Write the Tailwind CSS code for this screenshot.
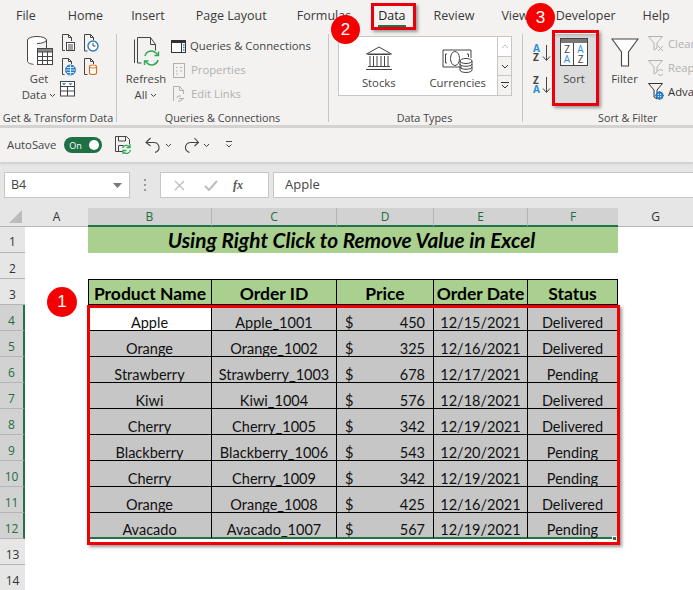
<!DOCTYPE html>
<html><head><meta charset="utf-8"><script src="https://cdn.jsdelivr.net/npm/@tailwindcss/browser@4"></script></head>
<body class="m-0 bg-white">
<div class="relative w-[693px] h-[590px] overflow-hidden bg-white font-['Open_Sans','Liberation_Sans',sans-serif] text-[#3b3a39]">

<!-- tabs -->
<div class="flex h-[32px] bg-[#f3f2f1] text-[12.500px] pt-[7px]">
  <span class="ml-[16px]">File</span><span class="ml-[32px]">Home</span><span class="ml-[28px]">Insert</span><span class="ml-[31px]">Page Layout</span><span class="ml-[30px]">Formulas</span>
  <span class="ml-[27px] relative text-[#222]">Data<i class="absolute left-0 right-0 top-[18px] h-[2px] bg-[#217346]"></i></span>
  <span class="ml-[28px]">Review</span><span class="ml-[27px]">View</span><span class="ml-[27px]">Developer</span><span class="ml-[27px]">Help</span>
</div>

<!-- ribbon -->
<div class="flex h-[96px] bg-[#f3f2f1] border-b-[3px] border-[#d4d3d2] text-[11.300px] text-[#444]">
  <!-- group 1 -->
  <div class="w-[117px] shrink-0 h-[88px] mt-[2px] flex flex-col border-r border-[#c8c6c4]">
    <div class="h-[76px] shrink-0 flex pl-[22px] pt-[1px]">
      <div class="w-[34px] flex flex-col items-center">
        <svg width="30" height="32" viewBox="0 0 30 32" fill="none" stroke="#444" stroke-width="1"><ellipse cx="13" cy="5" rx="9.500" ry="3.500" fill="#fff"/><path d="M3.500 5v21c0 2 4 3.500 9.500 3.500V5" fill="#fff" stroke="none"/><path d="M3.500 5v21c0 2 3 3 6 3.300M22.500 5v8"/><rect x="13.500" y="13.500" width="15" height="16" fill="#fff"/><path d="M13.500 13.500h15v3.500h-15z" fill="#888"/><path d="M13.500 21.500h15M13.500 25.500h15M18.500 17v12.500M23.500 17v12.500"/></svg>
        <span class="leading-[16px] mt-[4px]">Get</span>
        <span class="leading-[16px] whitespace-nowrap">Data <svg class="inline" width="7" height="5" viewBox="0 0 7 5" fill="none" stroke="#444"><path d="M1 1l2.500 2.500L6 1"/></svg></span>
      </div>
      <div class="ml-[5px] grid grid-cols-[22px_16px] grid-rows-[24px_23px_20px] -mt-[1px]">
        <svg width="15" height="18" viewBox="0 0 15 18" fill="none" stroke="#444"><path d="M1.500 16.500V.5h6l3 3V7M4 16.500h-2.500"/><path d="M7.500.5v3h3"/><rect x="5.500" y="8.500" width="8" height="8" fill="#fff"/><path d="M7 11h5M7 13h5M7 15h5"/></svg>
        <svg width="16" height="18" viewBox="0 0 16 18" fill="none" stroke="#444"><path d="M1.500 17V.5h6l3 3V6M1.500 17h3"/><path d="M7.500.5v3h3"/><circle cx="10" cy="12" r="5" fill="#fff" stroke="#2b7cc4" stroke-width="1.400"/><path d="M10 9v3h2.500" stroke="#444"/></svg>
        <svg width="15" height="18" viewBox="0 0 15 18" fill="none" stroke="#444"><path d="M1.500 16.500V.5h6l3 3V6M1.500 16.500h2"/><path d="M7.500.5v3h3"/><circle cx="9.500" cy="12" r="5" fill="#2b7cc4" stroke="#2b7cc4"/><path d="M4.500 12h10M9.500 7v10M6 9.500h7M6 14.500h7" stroke="#fff" stroke-width=".8"/></svg>
        <svg width="16" height="18" viewBox="0 0 16 18" fill="none" stroke="#444"><path d="M1.500 16.500V.5h6l3 3V6M1.500 16.500h3"/><path d="M7.500.5v3h3"/><path d="M6.500 8.500c0-2 7-2 7 0v6.500c0 2-7 2-7 0z" fill="#fff" stroke="#d9701f" stroke-width="1.200"/><path d="M6.500 8.500c0 2 7 2 7 0" stroke="#d9701f"/></svg>
        <svg class="-ml-[2px]" width="16" height="16" viewBox="0 0 16 16" fill="none" stroke="#444"><rect x="1.500" y=".5" width="14" height="14.500" fill="#fff"/><path d="M1.500 5.500h14M1.500 10h14M8.500 5.500V15"/><path d="M3.500 2.500h3l-1.500 1.500zM10 2.500h3l-1.500 1.500z" fill="#2b7cc4" stroke="#2b7cc4" stroke-width=".6"/></svg>
      </div>
    </div>
    <div class="shrink-0 text-center text-[10.800px] leading-[14px] mt-[1px] whitespace-nowrap">Get &amp; Transform Data</div>
  </div>
  <!-- group 2 -->
  <div class="w-[212px] shrink-0 h-[88px] mt-[2px] flex flex-col border-r border-[#c8c6c4]">
    <div class="h-[76px] shrink-0 flex pl-[10px] pt-[3px]">
      <div class="w-[38px] flex flex-col items-center">
        <svg width="30" height="32" viewBox="0 0 30 32" fill="none" stroke="#444"><path d="M3.500 26V2.500M6.500 26V.5h13l5 7v6"/><path d="M19.500.5v7h5"/><path d="M6.500 26h4"/><path d="M14 19a6.500 6.500 0 0 1 11-3l2 2M27 23a6.500 6.500 0 0 1-11 3l-2-2" stroke="#2fa84f" stroke-width="1.400"/><path d="M27.500 14.500v4h-4M13.500 28v-4h4" stroke="#2fa84f" stroke-width="1.400"/></svg>
        <span class="leading-[16px] mt-[2px]">Refresh</span>
        <span class="leading-[16px] whitespace-nowrap">All <svg class="inline" width="7" height="5" viewBox="0 0 7 5" fill="none" stroke="#444"><path d="M1 1l2.500 2.500L6 1"/></svg></span>
      </div>
      <div class="ml-[6px] flex flex-col gap-[8px] mt-[1px]">
        <div class="flex items-center gap-[4px] h-[16px] whitespace-nowrap"><svg width="15" height="15" viewBox="0 0 15 15" fill="none" stroke="#333"><rect x=".5" y="1.500" width="14" height="12" fill="#fff"/><path d="M.5 1.500h14v2h-14z" fill="#333"/><path d="M10.500 3v10.500" /><path d="M12 6h1.500M12 8.500h1.500M12 11h1.500" stroke="#2b7cc4" stroke-width="1.300"/></svg><span>Queries &amp; Connections</span></div>
        <div class="flex items-center gap-[6px] h-[16px] text-[#b1b0af] whitespace-nowrap"><svg class="ml-[2px]" width="12" height="15" viewBox="0 0 12 15" fill="none" stroke="#b1b0af"><rect x=".5" y=".5" width="11" height="14"/><path d="M3 4.500h1.500M7 4.500h2M3 8h1.500M7 8h2M3 11h1.500"/></svg><span>Properties</span></div>
        <div class="flex items-center gap-[5px] h-[16px] text-[#b1b0af] whitespace-nowrap"><svg class="ml-[2px]" width="13" height="16" viewBox="0 0 13 16" fill="none" stroke="#b1b0af"><path d="M.5 15V.5h6l4 4V8M6.500.5v4h4"/><path d="M4 12a2 2 0 0 1 2-2h2M9 13a2 2 0 0 1-2 2H5M6 12.500h5"/></svg><span>Edit Links</span></div>
      </div>
    </div>
    <div class="shrink-0 text-center text-[10.800px] leading-[14px] mt-[1px]">Queries &amp; Connections</div>
  </div>
  <!-- group 3 -->
  <div class="w-[194px] shrink-0 h-[88px] mt-[2px] flex flex-col border-r border-[#c8c6c4]">
    <div class="h-[76px] shrink-0 flex pl-[9px] pt-[2px]">
      <div class="flex w-[159px] h-[60px] bg-white border border-[#c8c6c4] border-r-0">
        <div class="w-[80px] flex flex-col items-center pt-[9px]">
          <svg width="28" height="25" viewBox="0 0 28 25" fill="none" stroke="#444"><path d="M1.500 8L14 1l12.500 7zM3 8.500h22M5 10v10M8.500 10v10M12 10v10M16 10v10M19.500 10v10M23 10v10M3 20.500h22M1 23.500h26"/></svg>
          <span class="leading-[14px] mt-[5px]">Stocks</span>
        </div>
        <div class="w-[79px] flex flex-col items-center pt-[12px]">
          <svg width="31" height="24" viewBox="0 0 31 24" fill="none" stroke="#444"><path d="M20 18H1V1h28v8"/><path d="M5 5H3.500v9H5M25 5h1.500v3"/><ellipse cx="13" cy="9.500" rx="4.500" ry="7"/><ellipse cx="24" cy="12" rx="6" ry="2.500" fill="#fff"/><path d="M18 12v9c0 3.300 12 3.300 12 0v-9M18 15c0 3 12 3 12 0M18 18c0 3 12 3 12 0"/></svg>
          <span class="leading-[14px] mt-[3px] whitespace-nowrap">Currencies</span>
        </div>
      </div>
      <div class="flex flex-col w-[15px] h-[60px] border border-[#c8c6c4] bg-[#f3f2f1]">
        <div class="h-[20px] bg-white flex items-center justify-center border-b border-[#c8c6c4]"><svg width="8" height="5" viewBox="0 0 8 5" fill="none" stroke="#bbb"><path d="M1 4l3-3 3 3"/></svg></div>
        <div class="h-[19px] flex items-center justify-center border-b border-[#c8c6c4]"><svg width="8" height="5" viewBox="0 0 8 5" fill="none" stroke="#333"><path d="M1 1l3 3 3-3"/></svg></div>
        <div class="flex-1 flex items-center justify-center"><svg width="8" height="8" viewBox="0 0 8 8" fill="none" stroke="#333"><path d="M0 .5h8M1 3l3 3 3-3"/></svg></div>
      </div>
    </div>
    <div class="shrink-0 text-center text-[10.800px] leading-[14px] mt-[1px] pr-[2px]">Data Types</div>
  </div>
  <!-- group 4 -->
  <div class="flex-1 h-[88px] mt-[2px] flex flex-col">
    <div class="h-[76px] shrink-0 flex pl-[10px] pt-[1px]">
      <div class="w-[20px] flex flex-col gap-[14px] pt-[9px] text-[10px] font-bold leading-[8px]">
        <div class="relative h-[18px] w-[18px]"><span class="absolute left-0 top-0 text-[#2b8fd6]">A</span><span class="absolute left-0 top-[9px] text-[#444]">Z</span><svg class="absolute left-[9px] top-0" width="9" height="18" viewBox="0 0 9 18" fill="none" stroke="#444"><path d="M4.500 1v15M1 12.500l3.500 4 3.500-4"/></svg></div>
        <div class="relative h-[18px] w-[18px]"><span class="absolute left-0 top-0 text-[#444]">Z</span><span class="absolute left-0 top-[9px] text-[#2b8fd6]">A</span><svg class="absolute left-[9px] top-0" width="9" height="18" viewBox="0 0 9 18" fill="none" stroke="#444"><path d="M4.500 1v15M1 12.500l3.500 4 3.500-4"/></svg></div>
      </div>
      <div class="w-[44px] -ml-[1px] h-[72px] -mt-[1px] bg-[#dcdcdc] flex flex-col items-center pt-[4px] shadow-[inset_2px_2px_3px_#bbb]">
        <div class="w-[28px] h-[28px] border border-[#444] bg-white flex flex-col">
          <div class="h-[4px] bg-[#777]"></div>
          <div class="flex-1 flex text-[10px] leading-[10px] text-center">
            <div class="w-1/2 border-r border-[#444] pt-[1px]"><div class="text-[#444]">Z</div><div class="text-[#2b8fd6]">A</div></div>
            <div class="w-1/2 pt-[1px]"><div class="text-[#2b8fd6]">A</div><div class="text-[#444]">Z</div></div>
          </div>
        </div>
        <span class="leading-[14px] mt-[6px]">Sort</span>
      </div>
      <div class="w-[52px] flex flex-col items-center pl-[1px] pt-[3px] ml-[2px]">
        <svg width="28" height="29" viewBox="0 0 28 29" fill="none" stroke="#444" stroke-width="1.100"><path d="M1 1h26L17.500 14v14h-7V14z" fill="#fff"/></svg>
        <span class="leading-[14px] mt-[5px]">Filter</span>
      </div>
      <div class="flex flex-col gap-[8px] -ml-[2px] whitespace-nowrap pt-[1px]">
        <div class="flex items-center gap-[3px] h-[16px] text-[#b1b0af]"><svg width="17" height="17" viewBox="0 0 17 17" fill="none" stroke="#b1b0af"><path d="M.5.5h14L9 7v5l-3 2V7z"/><path d="M10 10l5 5M15 10l-5 5"/></svg><span>Clear</span></div>
        <div class="flex items-center gap-[3px] h-[16px] text-[#b1b0af]"><svg width="17" height="17" viewBox="0 0 17 17" fill="none" stroke="#b1b0af"><path d="M.5.5h14L9 7v5l-3 2V7z"/><path d="M10 11a3 3 0 0 1 5 0M15 14a3 3 0 0 1-5 0"/></svg><span>Reapply</span></div>
        <div class="flex items-center gap-[3px] h-[16px] text-[#333]"><svg width="17" height="18" viewBox="0 0 17 18" fill="none" stroke="#333"><path d="M.5.5h14L9 7v9l-3-2V7z"/><circle cx="11.500" cy="12.500" r="3" fill="#fff" stroke="#2b7cc4" stroke-width="2"/><path d="M11.500 8v9M7 12.500h9" stroke="#2b7cc4" stroke-width="1.200"/></svg><span>Advanced</span></div>
      </div>
    </div>
    <div class="shrink-0 text-left text-[10.800px] leading-[14px] mt-[1px] pl-[75px] whitespace-nowrap">Sort &amp; Filter</div>
  </div>
</div>

<!-- quick access -->
<div class="flex items-center h-[34px] bg-[#f3f2f1] text-[11.300px] text-[#444] pl-[7px] shadow-[0_2px_2px_#cfcfcf] relative">
  <span>AutoSave</span>
  <div class="ml-[8px] w-[38px] h-[16px] rounded-full bg-[#1f7145] flex items-center justify-between pl-[5px] pr-[3px] text-white text-[9px] leading-none"><span>On</span><i class="w-[10px] h-[10px] rounded-full bg-white"></i></div>
  <svg class="ml-[13px]" width="17" height="19" viewBox="0 0 17 19" fill="none" stroke="#444"><path d="M8 15.500H.5V.5h11l3 3V8M3.500 1v4h7V1M3.500 15V9.500h5"/><path d="M7.500 12a4 4 0 0 1 7-1M15.500 14a4 4 0 0 1-7 2" stroke="#2fa84f" stroke-width="1.300"/><path d="M15 8v3.500h-3.500M8 18v-3.500h3.500" stroke="#2fa84f" stroke-width="1.300"/></svg>
  <svg class="ml-[13px]" width="16" height="16" viewBox="0 0 16 16" fill="none" stroke="#444" stroke-width="1.100"><path d="M5.500 1L1 5.500 5.500 9"/><path d="M1 5.500h8a5 5 0 0 1 3 9l-2 1"/></svg>
  <svg class="ml-[4px]" width="7" height="5" viewBox="0 0 7 5" fill="none" stroke="#444"><path d="M1 1l2.500 2.500L6 1"/></svg>
  <svg class="ml-[12px]" width="15" height="16" viewBox="0 0 15 16" fill="none" stroke="#444" stroke-width="1.100"><path d="M10.500 1l4 4.500-4 3.500"/><path d="M14.500 5.500h-8a5 5 0 0 0-3 9l2 1"/></svg>
  <svg class="ml-[4px]" width="7" height="5" viewBox="0 0 7 5" fill="none" stroke="#444"><path d="M1 1l2.500 2.500L6 1"/></svg>
  <svg class="ml-[15px]" width="8" height="8" viewBox="0 0 8 8" fill="none" stroke="#444"><path d="M1 .5h6M1.500 3.500L4 6l2.500-2.500"/></svg>
</div>

<!-- formula bar -->
<div class="flex h-[46px] pt-[10px] pl-[4px] bg-[#e6e6e6] text-[12.500px] text-[#444]">
  <div class="w-[126px] h-[26px] bg-white border border-[#c6c6c6] flex items-center justify-between pl-[6px] pr-[7px]"><span>B4</span><svg width="9" height="5" viewBox="0 0 9 5"><path d="M0 0h9L4.500 5z" fill="#777"/></svg></div>
  <div class="w-[30px] flex flex-col items-center justify-center gap-[3px] h-[26px]"><i class="w-[2px] h-[2px] bg-[#999]"></i><i class="w-[2px] h-[2px] bg-[#999]"></i><i class="w-[2px] h-[2px] bg-[#999]"></i></div>
  <div class="w-[109px] h-[26px] bg-white border border-[#c6c6c6] flex items-center pl-[13px]">
    <svg width="11" height="11" viewBox="0 0 11 11" fill="none" stroke="#bdbdbd" stroke-width="1.300"><path d="M1 1l9 9M10 1l-9 9"/></svg>
    <svg class="ml-[19px]" width="14" height="11" viewBox="0 0 14 11" fill="none" stroke="#bdbdbd" stroke-width="2"><path d="M1 6l4 4 8-9"/></svg>
    <span class="ml-[15px] font-['Liberation_Serif',serif] italic font-bold text-[12px] text-[#555]">fx</span>
  </div>
  <div class="ml-[4px] flex-1 h-[26px] bg-white border-y border-[#c6c6c6] border-l flex items-center pl-[11px] text-[13px]">Apple</div>
</div>

<!-- sheet -->
<div class="grid grid-cols-[25px_63px_124px_125px_97px_94px_90px_1fr] auto-rows-[19px] font-['Open_Sans',sans-serif] text-[12px]">
  <div class="bg-[#e6e6e6] border-b border-[#b5b5b5] relative"><svg class="absolute right-[3px] bottom-[3px]" width="13" height="13" viewBox="0 0 13 13"><path d="M13 0v13H0z" fill="#bcbcbc"/></svg></div>
  <div class="bg-[#e6e6e6] border-b border-[#b5b5b5] flex items-center justify-center text-[#333]">A</div>
  <div class="bg-[#d2d2d2] border-b-2 border-[#217346] border-r border-r-[#b5b5b5] flex items-center justify-center text-[#1f6e43]">B</div>
  <div class="bg-[#d2d2d2] border-b-2 border-[#217346] border-r border-r-[#b5b5b5] flex items-center justify-center text-[#1f6e43]">C</div>
  <div class="bg-[#d2d2d2] border-b-2 border-[#217346] border-r border-r-[#b5b5b5] flex items-center justify-center text-[#1f6e43]">D</div>
  <div class="bg-[#d2d2d2] border-b-2 border-[#217346] border-r border-r-[#b5b5b5] flex items-center justify-center text-[#1f6e43]">E</div>
  <div class="bg-[#d2d2d2] border-b-2 border-[#217346] flex items-center justify-center text-[#1f6e43]">F</div>
  <div class="bg-[#e6e6e6] border-b border-[#b5b5b5] flex items-center justify-center text-[#333]">G</div>
</div>
<div class="grid grid-cols-[25px_63px_124px_125px_97px_94px_90px_1fr] auto-rows-[26px] font-['Lato','Liberation_Sans',sans-serif] text-[14.500px] leading-[14px] text-[#111]">
  <!-- 1 -->
  <div class="bg-[#e6e6e6] border-b border-[#b5b5b5] flex items-center justify-center pt-[4px] font-['Open_Sans',sans-serif] text-[12px] text-[#333]">1</div><div></div>
  <div class="col-span-5 bg-[#a9d08e] flex items-center justify-center pr-[3px] font-bold italic text-[20.800px] text-black">Using Right Click to Remove Value in Excel</div><div></div>
  <!-- 2 -->
  <div class="bg-[#e6e6e6] border-b border-[#b5b5b5] flex items-center justify-center pt-[6px] font-['Open_Sans',sans-serif] text-[12px] text-[#333]">2</div><div class="col-span-7"></div>
  <!-- 3 -->
  <div class="bg-[#e6e6e6] border-b border-[#b5b5b5] flex items-center justify-center pt-[6px] font-['Open_Sans',sans-serif] text-[12px] text-[#333]">3</div><div></div>
  <div class="bg-[#a9d08e] border border-black flex items-center justify-center pt-[3px] font-bold text-[17.500px] text-black">Product Name</div>
  <div class="bg-[#a9d08e] border-y border-r border-black flex items-center justify-center pt-[3px] font-bold text-[17.500px] text-black">Order ID</div>
  <div class="bg-[#a9d08e] border-y border-r border-black flex items-center justify-center pt-[3px] font-bold text-[17.500px] text-black">Price</div>
  <div class="bg-[#a9d08e] border-y border-r border-black flex items-center justify-center pt-[3px] font-bold text-[17.500px] text-black">Order Date</div>
  <div class="bg-[#a9d08e] border-y border-r border-black flex items-center justify-center pt-[3px] font-bold text-[17.500px] text-black">Status</div><div></div>
  <!-- 4 -->
  <div class="bg-[#d2d2d2] border-b border-[#b5b5b5] border-r-2 border-r-[#217346] flex items-center justify-center pt-[6px] font-['Open_Sans',sans-serif] text-[12px] text-[#1f6e43]">4</div><div></div>
  <div class="bg-white border-r border-b border-black flex items-end justify-center">Apple</div>
  <div class="bg-[#c6c6c6] border-r border-b border-black flex items-end justify-center">Apple_1001</div>
  <div class="bg-[#c6c6c6] border-r border-b border-black flex items-end justify-between px-[8px]"><span>$</span><span>450</span></div>
  <div class="bg-[#c6c6c6] border-r border-b border-black flex items-end justify-center">12/15/2021</div>
  <div class="bg-[#c6c6c6] border-r border-b border-black flex items-end justify-center">Delivered</div><div></div>
  <!-- 5 -->
  <div class="bg-[#d2d2d2] border-b border-[#b5b5b5] border-r-2 border-r-[#217346] flex items-center justify-center pt-[6px] font-['Open_Sans',sans-serif] text-[12px] text-[#1f6e43]">5</div><div></div>
  <div class="bg-[#c6c6c6] border-r border-b border-black flex items-end justify-center">Orange</div>
  <div class="bg-[#c6c6c6] border-r border-b border-black flex items-end justify-center">Orange_1002</div>
  <div class="bg-[#c6c6c6] border-r border-b border-black flex items-end justify-between px-[8px]"><span>$</span><span>325</span></div>
  <div class="bg-[#c6c6c6] border-r border-b border-black flex items-end justify-center">12/16/2021</div>
  <div class="bg-[#c6c6c6] border-r border-b border-black flex items-end justify-center">Delivered</div><div></div>
  <!-- 6 -->
  <div class="bg-[#d2d2d2] border-b border-[#b5b5b5] border-r-2 border-r-[#217346] flex items-center justify-center pt-[6px] font-['Open_Sans',sans-serif] text-[12px] text-[#1f6e43]">6</div><div></div>
  <div class="bg-[#c6c6c6] border-r border-b border-black flex items-end justify-center">Strawberry</div>
  <div class="bg-[#c6c6c6] border-r border-b border-black flex items-end justify-center">Strawberry_1003</div>
  <div class="bg-[#c6c6c6] border-r border-b border-black flex items-end justify-between px-[8px]"><span>$</span><span>678</span></div>
  <div class="bg-[#c6c6c6] border-r border-b border-black flex items-end justify-center">12/17/2021</div>
  <div class="bg-[#c6c6c6] border-r border-b border-black flex items-end justify-center">Pending</div><div></div>
  <!-- 7 -->
  <div class="bg-[#d2d2d2] border-b border-[#b5b5b5] border-r-2 border-r-[#217346] flex items-center justify-center pt-[6px] font-['Open_Sans',sans-serif] text-[12px] text-[#1f6e43]">7</div><div></div>
  <div class="bg-[#c6c6c6] border-r border-b border-black flex items-end justify-center">Kiwi</div>
  <div class="bg-[#c6c6c6] border-r border-b border-black flex items-end justify-center">Kiwi_1004</div>
  <div class="bg-[#c6c6c6] border-r border-b border-black flex items-end justify-between px-[8px]"><span>$</span><span>576</span></div>
  <div class="bg-[#c6c6c6] border-r border-b border-black flex items-end justify-center">12/18/2021</div>
  <div class="bg-[#c6c6c6] border-r border-b border-black flex items-end justify-center">Delivered</div><div></div>
  <!-- 8 -->
  <div class="bg-[#d2d2d2] border-b border-[#b5b5b5] border-r-2 border-r-[#217346] flex items-center justify-center pt-[6px] font-['Open_Sans',sans-serif] text-[12px] text-[#1f6e43]">8</div><div></div>
  <div class="bg-[#c6c6c6] border-r border-b border-black flex items-end justify-center">Cherry</div>
  <div class="bg-[#c6c6c6] border-r border-b border-black flex items-end justify-center">Cherry_1005</div>
  <div class="bg-[#c6c6c6] border-r border-b border-black flex items-end justify-between px-[8px]"><span>$</span><span>342</span></div>
  <div class="bg-[#c6c6c6] border-r border-b border-black flex items-end justify-center">12/19/2021</div>
  <div class="bg-[#c6c6c6] border-r border-b border-black flex items-end justify-center">Delivered</div><div></div>
  <!-- 9 -->
  <div class="bg-[#d2d2d2] border-b border-[#b5b5b5] border-r-2 border-r-[#217346] flex items-center justify-center pt-[6px] font-['Open_Sans',sans-serif] text-[12px] text-[#1f6e43]">9</div><div></div>
  <div class="bg-[#c6c6c6] border-r border-b border-black flex items-end justify-center">Blackberry</div>
  <div class="bg-[#c6c6c6] border-r border-b border-black flex items-end justify-center">Blackberry_1006</div>
  <div class="bg-[#c6c6c6] border-r border-b border-black flex items-end justify-between px-[8px]"><span>$</span><span>543</span></div>
  <div class="bg-[#c6c6c6] border-r border-b border-black flex items-end justify-center">12/20/2021</div>
  <div class="bg-[#c6c6c6] border-r border-b border-black flex items-end justify-center">Pending</div><div></div>
  <!-- 10 -->
  <div class="bg-[#d2d2d2] border-b border-[#b5b5b5] border-r-2 border-r-[#217346] flex items-center justify-center pt-[6px] font-['Open_Sans',sans-serif] text-[12px] text-[#1f6e43]">10</div><div></div>
  <div class="bg-[#c6c6c6] border-r border-b border-black flex items-end justify-center">Cherry</div>
  <div class="bg-[#c6c6c6] border-r border-b border-black flex items-end justify-center">Cherry_1009</div>
  <div class="bg-[#c6c6c6] border-r border-b border-black flex items-end justify-between px-[8px]"><span>$</span><span>342</span></div>
  <div class="bg-[#c6c6c6] border-r border-b border-black flex items-end justify-center">12/19/2021</div>
  <div class="bg-[#c6c6c6] border-r border-b border-black flex items-end justify-center">Pending</div><div></div>
  <!-- 11 -->
  <div class="bg-[#d2d2d2] border-b border-[#b5b5b5] border-r-2 border-r-[#217346] flex items-center justify-center pt-[6px] font-['Open_Sans',sans-serif] text-[12px] text-[#1f6e43]">11</div><div></div>
  <div class="bg-[#c6c6c6] border-r border-b border-black flex items-end justify-center">Orange</div>
  <div class="bg-[#c6c6c6] border-r border-b border-black flex items-end justify-center">Orange_1008</div>
  <div class="bg-[#c6c6c6] border-r border-b border-black flex items-end justify-between px-[8px]"><span>$</span><span>425</span></div>
  <div class="bg-[#c6c6c6] border-r border-b border-black flex items-end justify-center">12/16/2021</div>
  <div class="bg-[#c6c6c6] border-r border-b border-black flex items-end justify-center">Delivered</div><div></div>
  <!-- 12 -->
  <div class="bg-[#d2d2d2] border-b border-[#b5b5b5] border-r-2 border-r-[#217346] flex items-center justify-center pt-[6px] font-['Open_Sans',sans-serif] text-[12px] text-[#1f6e43]">12</div><div></div>
  <div class="bg-[#c6c6c6] border-r border-black flex items-end justify-center border-b-2 border-b-[#217346]">Avacado</div>
  <div class="bg-[#c6c6c6] border-r border-black flex items-end justify-center border-b-2 border-b-[#217346]">Avacado_1007</div>
  <div class="bg-[#c6c6c6] border-r border-black flex items-end justify-between px-[8px] border-b-2 border-b-[#217346]"><span>$</span><span>567</span></div>
  <div class="bg-[#c6c6c6] border-r border-black flex items-end justify-center border-b-2 border-b-[#217346]">12/19/2021</div>
  <div class="bg-[#c6c6c6] border-r border-black flex items-end justify-center border-b-2 border-b-[#217346]">Pending</div><div></div>
  <!-- 13 -->
  <div class="bg-[#e6e6e6] border-b border-[#b5b5b5] flex items-center justify-center pt-[6px] font-['Open_Sans',sans-serif] text-[12px] text-[#333]">13</div><div class="col-span-7"></div>
  <!-- 14 -->
  <div class="bg-[#e6e6e6] border-b border-[#b5b5b5] flex items-center justify-center pt-[6px] font-['Open_Sans',sans-serif] text-[12px] text-[#333]">14</div><div class="col-span-7"></div>
</div>

<!-- overlay annotations -->
<div class="absolute left-[371px] top-[3px] w-[45px] h-[27px] border-[3px] border-[#e8000b] shadow-[2px_2px_3px_#999]"></div>
<div class="absolute left-[552px] top-[30px] w-[47px] h-[76px] border-[3px] border-[#e8000b] shadow-[2px_2px_3px_#999]"></div>
<div class="absolute left-[87px] top-[305px] w-[533px] h-[240px] border-[3px] border-[#f00000] shadow-[2px_2px_3px_#999]"></div>
<div class="absolute left-[612px] top-[536px] w-[5px] h-[5px] bg-[#217346] border border-white"></div>
<div class="absolute left-[331px] top-[15px] w-[29px] h-[29px] rounded-full bg-[#f40000] text-white text-[17px] flex items-center justify-center font-['Liberation_Sans',sans-serif]">2</div>
<div class="absolute left-[526px] top-[3px] w-[29px] h-[29px] rounded-full bg-[#f40000] text-white text-[17px] flex items-center justify-center font-['Liberation_Sans',sans-serif]">3</div>
<div class="absolute left-[47px] top-[287px] w-[30px] h-[30px] rounded-full bg-[#f40000] text-white text-[17px] flex items-center justify-center font-['Liberation_Sans',sans-serif]">1</div>
</div>
</body></html>
